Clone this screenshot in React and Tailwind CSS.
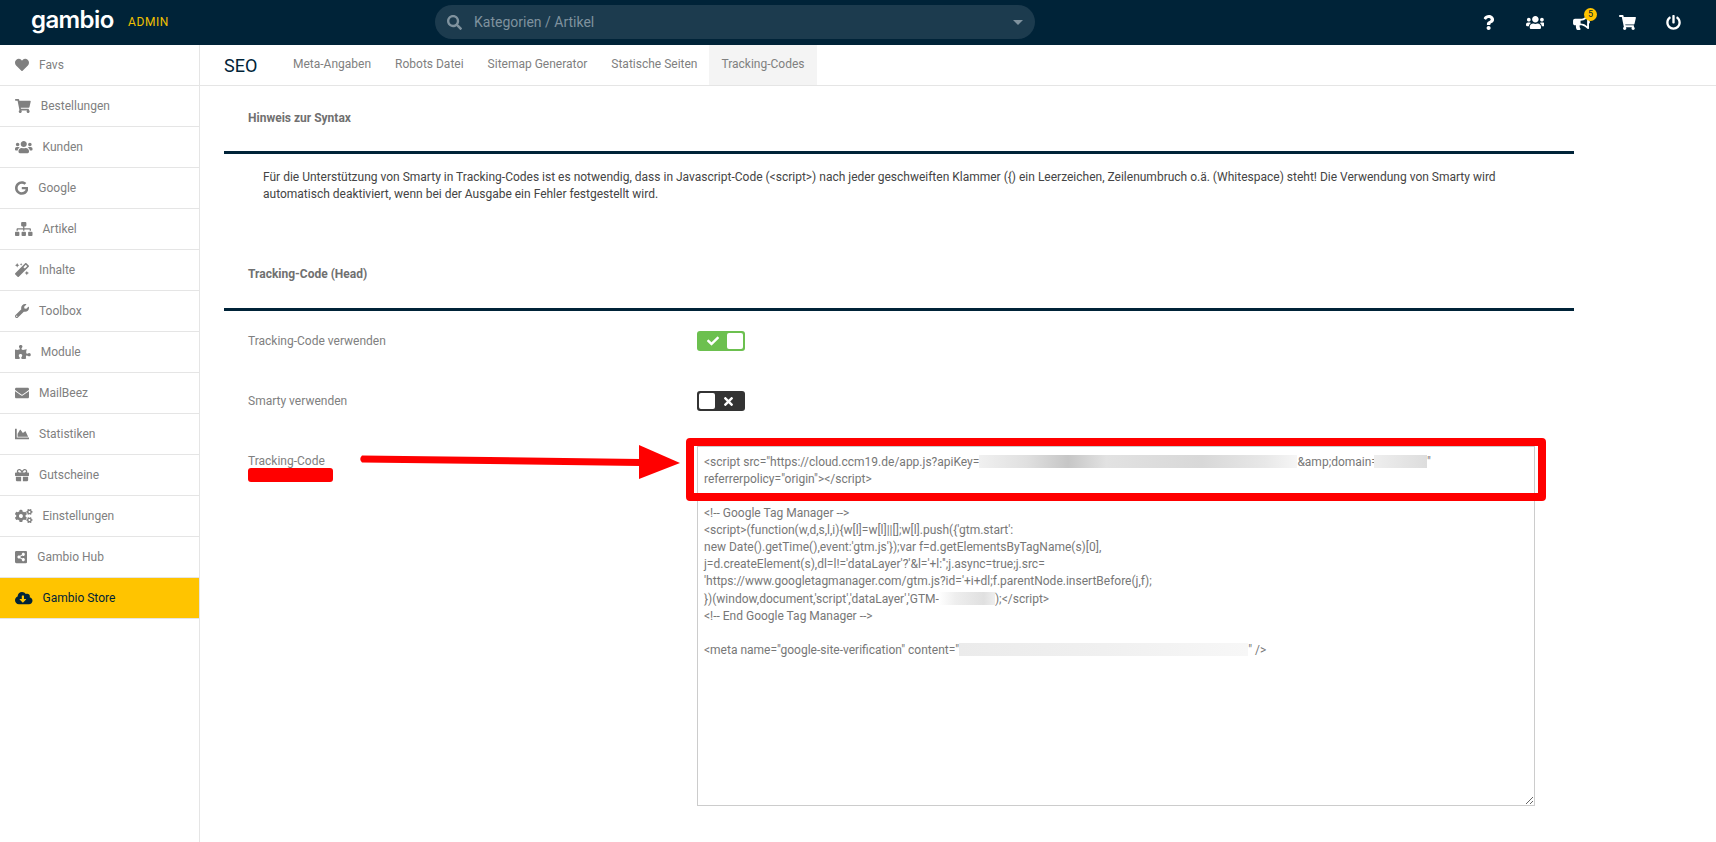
import React from 'react'
import {
  FaHeart, FaShoppingCart, FaUsers, FaGoogle, FaSitemap, FaMagic, FaWrench, FaPuzzlePiece,
  FaEnvelope, FaChartArea, FaGift, FaCogs, FaShareAltSquare, FaCloudDownloadAlt,
  FaQuestion, FaBullhorn, FaPowerOff, FaSearch, FaCheck, FaTimes,
} from 'react-icons/fa'

const menu = [
  ['Favs', FaHeart, 'w-[14px]'],
  ['Bestellungen', FaShoppingCart, 'w-[15.75px]'],
  ['Kunden', FaUsers, 'w-[17.5px]'],
  ['Google', FaGoogle, 'w-[13.35px]'],
  ['Artikel', FaSitemap, 'w-[17.5px]'],
  ['Inhalte', FaMagic, 'w-[14px]'],
  ['Toolbox', FaWrench, 'w-[14px]'],
  ['Module', FaPuzzlePiece, 'w-[15.75px]'],
  ['MailBeez', FaEnvelope, 'w-[14px]'],
  ['Statistiken', FaChartArea, 'w-[14px]'],
  ['Gutscheine', FaGift, 'w-[14px]'],
  ['Einstellungen', FaCogs, 'w-[17.5px]'],
  ['Gambio Hub', FaShareAltSquare, 'w-[12.25px]'],
]

const tabs = ['Meta-Angaben', 'Robots Datei', 'Sitemap Generator', 'Statische Seiten', 'Tracking-Codes']

const Blur = ({ className }) => (
  <span className={`inline-block h-[13px] align-[-2px] ${className}`} />
)

const Header = () => (
  <header className="h-[45px] shrink-0 bg-[#002338] flex items-center pb-[1px] text-white">
    <div className="w-[435px] shrink-0 pl-[31px] flex items-center">
      <span className="font-['Inter'] font-semibold text-[24px] leading-none tracking-[-0.6px] w-[97px] -mt-1">gambio</span>
      <span className="text-xs tracking-[0.6px] text-[#f0c000]">ADMIN</span>
    </div>
    <div className="w-[600px] h-[34px] rounded-full bg-[#1c3b4e] flex items-center pl-[12px] pr-3 text-[#7f929e]">
      <FaSearch className="h-[15px] w-[15px] mr-[12px]" />
      <span className="text-sm flex-1">Kategorien / Artikel</span>
      <span className="w-0 h-0 border-x-[5px] border-x-transparent border-t-[5px] border-t-[#7f929e]" />
    </div>
    <div className="ml-auto pr-5 flex items-center">
      <span className="w-[46px] flex justify-center"><FaQuestion className="h-[15px] w-[11.25px]" /></span>
      <span className="w-[46px] flex justify-center"><FaUsers className="h-[15px] w-[18.75px]" /></span>
      <span className="w-[46px] flex justify-center relative">
        <FaBullhorn className="h-[15px] w-[17px]" />
        <span className="absolute left-[26px] -top-[7px] w-[13px] h-[13px] rounded-full bg-[#ffc400] text-[#002338] text-[9px] leading-[13px] text-center">5</span>
      </span>
      <span className="w-[46px] flex justify-center"><FaShoppingCart className="h-[15px] w-[17px]" /></span>
      <span className="w-[46px] flex justify-center"><FaPowerOff className="h-[15px] w-[15px]" /></span>
    </div>
  </header>
)

const Sidebar = () => (
  <aside className="w-[200px] shrink-0 border-r border-[#e5e5e5]">
    {menu.map(([label, Icon, width]) => (
      <div key={label} className="h-[41px] border-b border-[#e5e5e5] pl-[15px] flex items-center gap-[10px] text-xs text-[#808080]">
        <Icon className={`h-[14px] shrink-0 ${width}`} />
        <span>{label}</span>
      </div>
    ))}
    <div className="h-[41px] border-b border-[#e5e5e5] bg-[#ffc400] pl-[15px] flex items-center gap-[10px] text-xs text-[#002338]">
      <FaCloudDownloadAlt className="h-[14px] w-[17.5px] shrink-0" />
      <span>Gambio Store</span>
    </div>
  </aside>
)

const Toggle = ({ on }) => on ? (
  <div className="w-12 h-5 rounded-[3px] bg-[#6cc04f] flex items-center justify-between p-[2px] text-white">
    <FaCheck className="h-[12px] w-[12px] ml-[8px]" />
    <span className="w-4 h-4 rounded-[2px] bg-white" />
  </div>
) : (
  <div className="w-12 h-5 rounded-[3px] bg-[#333] flex items-center justify-between p-[2px] text-white">
    <span className="w-4 h-4 rounded-[2px] bg-white" />
    <FaTimes className="h-[13px] w-[9px] mr-[10px]" />
  </div>
)

const SectionTitle = ({ children, className }) => (
  <div className={`border-b-[3px] border-[#002338] pl-6 text-xs font-bold text-[#707070] ${className}`}>{children}</div>
)

const Annotations = () => (
  <>
    <div className="absolute left-[686px] top-[438px] w-[860px] h-[63px] border-[8px] border-[#ff0000] rounded-[4px]" />
    <div className="absolute left-[248px] top-[468px] w-[85px] h-[14px] rounded-[3px] bg-[#ff0000]" />
    <svg className="absolute left-0 top-0 pointer-events-none" width="1716" height="842">
      <path d="M362 455.5 L640 459 L640 466 L362 462.5 Q358.500 459 362 455.500 Z" fill="#ff0000" />
      <polygon points="639,445 680,463 639,479" fill="#ff0000" />
    </svg>
  </>
)

export default function App() {
  return (
    <div className="relative h-screen overflow-hidden flex flex-col bg-white font-['Roboto',sans-serif]">
      <Header />
      <div className="flex flex-1 min-h-0">
        <Sidebar />
        <main className="flex-1 min-w-0 pl-6">
          <nav className="h-[41px] -ml-6 pl-6 border-b border-[#e5e5e5] flex items-stretch">
            <div className="w-[57px] text-lg text-[#002338] leading-[41px]">SEO</div>
            {tabs.map(t => (
              <div key={t} className={`px-3 text-xs text-[#808080] leading-[39px] ${t === 'Tracking-Codes' ? 'bg-[#f4f4f4]' : ''}`}>{t}</div>
            ))}
          </nav>
          <div className="w-[1350px]">
            <SectionTitle className="pt-[24px] pb-[24px] leading-[17px]">Hinweis zur Syntax</SectionTitle>
            <p className="pl-[39px] pr-6 pt-[15px] text-xs leading-[17px] text-[#444]">
              Für die Unterstützung von Smarty in Tracking-Codes ist es notwendig, dass in Javascript-Code (&lt;script&gt;) nach jeder geschweiften Klammer ({'{'}) ein Leerzeichen, Zeilenumbruch o.ä. (Whitespace) steht! Die Verwendung von Smarty wird automatisch deaktiviert, wenn bei der Ausgabe ein Fehler festgestellt wird.
            </p>
            <SectionTitle className="mt-[63px] pb-[25px] leading-[17px]">Tracking-Code (Head)</SectionTitle>
            <div className="pl-6 text-xs text-[#808080]">
              <div className="h-[60px] flex items-center">
                <span className="w-[449px]">Tracking-Code verwenden</span>
                <Toggle on />
              </div>
              <div className="h-[60px] flex items-center">
                <span className="w-[449px]">Smarty verwenden</span>
                <Toggle />
              </div>
              <div className="flex pt-[15px]">
                <span className="w-[449px] pt-[7px] leading-[17px]">Tracking-Code</span>
                <div className="w-[838px] h-[360px] border border-[#ccc] px-[6px] py-[6.5px] leading-[17.14px] text-[#777] resize overflow-auto whitespace-pre-wrap">
                  &lt;script src="https://cloud.ccm19.de/app.js?apiKey=<Blur className="w-[318px] bg-[linear-gradient(90deg,#f0f0f0_0%,#e0e0e0_15%,#c6c6c6_28%,#e2e2e2_40%,#d8d8d8_70%,#e8e8e8_90%,#f6f6f6_100%)]" />&amp;amp;domain=<Blur className="w-[53px] -ml-[4px] bg-[linear-gradient(90deg,#eee,#ddd)]" />"{'\n'}
                  referrerpolicy="origin"&gt;&lt;/script&gt;{'\n\n'}
                  &lt;!-- Google Tag Manager --&gt;{'\n'}
                  &lt;script&gt;(function(w,d,s,l,i){'{'}w[l]=w[l]||[];w[l].push({'{'}'gtm.start':{'\n'}
                  new Date().getTime(),event:'gtm.js'{'}'});var f=d.getElementsByTagName(s)[0],{'\n'}
                  j=d.createElement(s),dl=l!='dataLayer'?'&amp;l='+l:'';j.async=true;j.src={'\n'}
                  'https://www.googletagmanager.com/gtm.js?id='+i+dl;f.parentNode.insertBefore(j,f);{'\n'}
                  {'}'})(window,document,'script','dataLayer','GTM-<Blur className="w-[56px] bg-[linear-gradient(90deg,#fff,#eee_30%,#e0e0e0_80%,#eee)]" />);&lt;/script&gt;{'\n'}
                  &lt;!-- End Google Tag Manager --&gt;{'\n\n'}
                  &lt;meta name="google-site-verification" content="<Blur className="w-[289px] h-4 bg-[linear-gradient(90deg,#ebebeb,#f0f0f0_50%,#f7f7f7)]" />" /&gt;
                </div>
              </div>
            </div>
          </div>
        </main>
      </div>
      <Annotations />
    </div>
  )
}
